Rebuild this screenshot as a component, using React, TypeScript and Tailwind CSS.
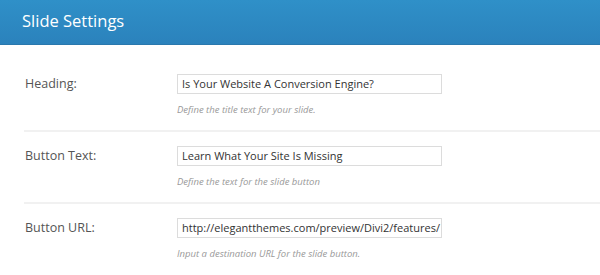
import React from "react";

const rows = [
  { label: "Heading:", value: "Is Your Website A Conversion Engine?", help: "Define the title text for your slide." },
  { label: "Button Text:", value: "Learn What Your Site Is Missing", help: "Define the text for the slide button" },
  { label: "Button URL:", value: "http://elegantthemes.com/preview/Divi2/features/", help: "Input a destination URL for the slide button." },
];

export default function App() {
  return (
    <div className="w-[600px] h-[275px] bg-white overflow-hidden" style={{ fontFamily: '"Open Sans", sans-serif' }}>
      <div className="h-[45px] bg-gradient-to-b from-[#2f90c8] to-[#2b82bc] border-b border-[#2a78ad] flex items-center pl-[22px]">
        <h1 className="text-white text-[16.5px] leading-none -mt-[1px]">Slide Settings</h1>
      </div>
      <div className="pt-[15px] pl-[24px]">
        {rows.map((r, i) => (
          <div key={i} className={`flex pt-[14px] pb-[14px] ${i < rows.length - 1 ? "border-b-2 border-[#f1f1f1]" : ""}`}>
            <div className="w-[153px] pl-[1px] h-[20px] flex items-center text-[12.5px] text-[#555]">{r.label}</div>
            <div>
              <div className="w-[265px] h-[20px] border border-[#dcdcdc] flex items-center px-[4px] text-[11px] text-[#333] whitespace-nowrap overflow-hidden">
                {r.value}
              </div>
              <div className="mt-[9px] text-[9.5px] italic text-[#999] leading-[13px]">{r.help}</div>
            </div>
          </div>
        ))}
      </div>
    </div>
  );
}
